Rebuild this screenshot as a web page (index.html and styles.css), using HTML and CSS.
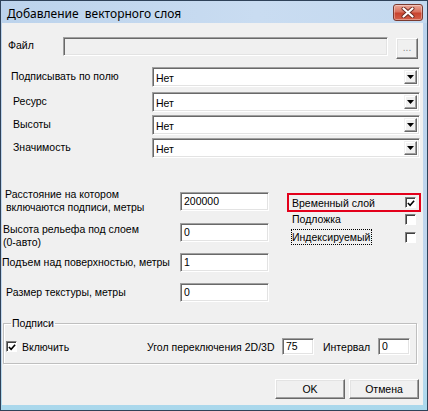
FILE: index.html
```html
<!DOCTYPE html>
<html>
<head>
<meta charset="utf-8">
<link rel="stylesheet" href="styles.css">
</head>
<body>
<div class="window">
  <div class="titlebar">
    <span class="title">Добавление  векторного слоя</span>
    <div class="close">
      <svg width="14" height="11" viewBox="0 0 14 11">
        <path d="M2.5 1.5 L11.5 9.5 M11.5 1.5 L2.5 9.5" stroke="#6e2b22" stroke-width="4" stroke-linecap="round"/>
        <path d="M2.5 1.5 L11.5 9.5 M11.5 1.5 L2.5 9.5" stroke="#ffffff" stroke-width="2.2" stroke-linecap="round"/>
      </svg>
    </div>
  </div>
  <div class="client">
    <div class="file-row">
      <span class="file-label">Файл</span>
      <div class="edit file-edit"></div>
      <div class="btn browse">...</div>
    </div>

    <div class="combo-row r1">
      <span class="combo-label first">Подписывать по полю</span>
      <div class="combo"><span class="combo-value">Нет</span><span class="drop"><svg width="7" height="4" viewBox="0 0 7 4"><path d="M0 0 H7 L3.5 4 Z" fill="#000"/></svg></span></div>
    </div>
    <div class="combo-row r2">
      <span class="combo-label">Ресурс</span>
      <div class="combo"><span class="combo-value">Нет</span><span class="drop"><svg width="7" height="4" viewBox="0 0 7 4"><path d="M0 0 H7 L3.5 4 Z" fill="#000"/></svg></span></div>
    </div>
    <div class="combo-row r3">
      <span class="combo-label">Высоты</span>
      <div class="combo"><span class="combo-value">Нет</span><span class="drop"><svg width="7" height="4" viewBox="0 0 7 4"><path d="M0 0 H7 L3.5 4 Z" fill="#000"/></svg></span></div>
    </div>
    <div class="combo-row r4">
      <span class="combo-label">Значимость</span>
      <div class="combo"><span class="combo-value">Нет</span><span class="drop"><svg width="7" height="4" viewBox="0 0 7 4"><path d="M0 0 H7 L3.5 4 Z" fill="#000"/></svg></span></div>
    </div>

    <div class="lower">
      <div class="params">
        <div class="param pa">
          <div class="param-label la"><div>Расстояние на котором</div><div class="indent">включаются подписи, метры</div></div>
          <div class="edit num fa">200000</div>
        </div>
        <div class="param pb">
          <div class="param-label lb"><div>Высота рельефа под слоем</div><div>(0-авто)</div></div>
          <div class="edit num">0</div>
        </div>
        <div class="param pc">
          <div class="param-label lc">Подъем над поверхностью, метры</div>
          <div class="edit num">1</div>
        </div>
        <div class="param pd">
          <div class="param-label ld">Размер текстуры, метры</div>
          <div class="edit num">0</div>
        </div>
      </div>
      <div class="flags">
        <div class="flag highlight">
          <span>Временный слой</span>
          <span class="check"><svg width="9" height="9" viewBox="0 0 9 9"><path d="M1 4 L3.5 6.5 L8 1.5" fill="none" stroke="#000" stroke-width="1.8"/></svg></span>
        </div>
        <div class="flag plain">
          <span>Подложка</span>
          <span class="check"></span>
        </div>
        <div class="flag focused">
          <span class="focus">Индексируемый</span>
          <span class="check"></span>
        </div>
      </div>
    </div>

    <fieldset class="group">
      <legend>Подписи</legend>
      <div class="group-row">
        <div class="enable">
          <span class="check small"><svg width="9" height="9" viewBox="0 0 9 9"><path d="M1 4 L3.5 6.5 L8 1.5" fill="none" stroke="#000" stroke-width="1.8"/></svg></span>
          <span class="enable-text">Включить</span>
        </div>
        <span class="angle-label">Угол переключения 2D/3D</span>
        <div class="edit small-num">75</div>
        <span class="interval-label">Интервал</span>
        <div class="edit small-num">0</div>
      </div>
    </fieldset>

    <div class="buttons">
      <div class="btn push">OK</div>
      <div class="btn push">Отмена</div>
    </div>
  </div>
</div>
</body>
</html>
```

FILE: styles.css
```css
* { box-sizing: border-box; }
html, body { margin: 0; padding: 0; }
body {
  width: 428px;
  height: 411px;
  overflow: hidden;
  background: #ffffff;
  font-family: "Liberation Sans", Arial, sans-serif;
  font-size: 10.5px;
  color: #000;
}

.window {
  width: 428px;
  height: 411px;
  border: 1px solid #2f4259;
  background: linear-gradient(#bad2ec, #c3d8ee 85%, #a9d8ec);
  display: flex;
  flex-direction: column;
}

.titlebar {
  height: 22px;
  display: flex;
  align-items: flex-start;
  justify-content: space-between;
  padding: 0 4px 0 6px;
  background: linear-gradient(to right, #bcd3ec, #c9dcf1 60%, #c4d9ef);
}
.title {
  font-family: "Noto Sans", "Open Sans", sans-serif;
  font-size: 12px;
  line-height: 16px;
  margin-top: 5px;
  white-space: pre;
  color: #000;
}
.close {
  width: 30px;
  height: 17px;
  margin-top: 3px;
  border: 1px solid #7a3a30;
  border-radius: 3px;
  background: linear-gradient(#eba898, #d9725f 45%, #c9432e 55%, #d4604a);
  display: flex;
  align-items: center;
  justify-content: center;
  box-shadow: inset 0 0 0 1px rgba(255,255,255,0.35);
}

.client {
  flex: 1;
  margin: 0 4px 5px 1px;
  background: #f0f0f0;
  display: flex;
  flex-direction: column;
}

/* edits */
.edit {
  height: 19px;
  border: 1px solid;
  border-color: #a0a0a0 #ffffff #ffffff #a0a0a0;
  box-shadow: inset 1px 1px 0 #696969, inset -1px -1px 0 #e3e3e3;
  background: #fff;
  padding: 0 3px;
  line-height: 17px;
  white-space: nowrap;
}

.btn {
  border: 1px solid;
  border-color: #ffffff #696969 #696969 #ffffff;
  box-shadow: inset -1px -1px 0 #a0a0a0, inset 1px 1px 0 #e3e3e3;
  background: #f0f0f0;
  display: flex;
  align-items: center;
  justify-content: center;
}

/* file row */
.file-row {
  display: flex;
  margin-top: 14px;
  height: 22px;
}
.file-label {
  width: 61px;
  padding-left: 6px;
  line-height: 16px;
}
.file-edit {
  width: 325px;
  background: #f0f0f0;
}
.browse {
  width: 22px;
  height: 21px;
  margin-left: 8px;
  margin-top: 1px;
  color: #8a8a8a;
  font-size: 10px;
  padding-bottom: 2px;
}

/* combos */
.combo-row {
  display: flex;
  align-items: center;
  height: 20px;
}
.r1 { margin-top: 8px; }
.r2 { margin-top: 5px; }
.r3, .r4 { margin-top: 3px; }
.combo-label {
  width: 150px;
  padding-left: 11px;
  margin-top: -2px;
}
.combo-label.first { padding-left: 9px; }
.combo {
  width: 268px;
  height: 20px;
  border: 1px solid;
  border-color: #a0a0a0 #ffffff #ffffff #a0a0a0;
  box-shadow: inset 1px 1px 0 #696969, inset -1px -1px 0 #e3e3e3;
  background: #fff;
  display: flex;
  align-items: stretch;
  padding: 2px 2px 2px 2px;
}
.combo-value {
  flex: 1;
  padding-left: 1px;
  line-height: 16px;
}
.drop {
  width: 13px;
  border: 1px solid;
  border-color: #f0f0f0 #696969 #696969 #f0f0f0;
  box-shadow: inset -1px -1px 0 #a0a0a0, inset 1px 1px 0 #ffffff;
  background: #f0f0f0;
  display: flex;
  align-items: center;
  justify-content: center;
}

/* lower */
.lower {
  display: flex;
  margin-top: 30px;
}
.params {
  width: 267px;
  display: flex;
  flex-direction: column;
}
.param {
  display: flex;
  align-items: flex-start;
  justify-content: space-between;
}
.param-label { line-height: 13px; white-space: nowrap; }
.num { width: 89px; }
.pa { height: 30px; }
.la { padding-left: 3px; }
.la .indent { padding-left: 1px; }
.fa { margin-top: 4px; }
.pb { margin-top: 5px; height: 27px; }
.lb { padding-left: 1px; }
.pc { margin-top: 3px; height: 19px; }
.lc { margin-top: 3px; }
.pd { margin-top: 11px; height: 19px; }
.ld { margin-top: 3px; padding-left: 4px; }

.flags {
  width: 134px;
  margin-left: 18px;
  margin-top: 5px;
  display: flex;
  flex-direction: column;
}
.flag {
  display: flex;
  align-items: center;
  justify-content: space-between;
}
.highlight {
  height: 19px;
  border: 2px solid #e3001b;
  padding: 0 3px;
}
.plain {
  height: 14px;
  padding: 0 5px;
}
.focused {
  height: 16px;
  margin-top: 3px;
  padding: 0 5px 0 4px;
}
.focus {
  border: 1px dotted #000;
  line-height: 14px;
  padding-right: 1px;
}
.check {
  width: 11px;
  height: 11px;
  border: 1px solid;
  border-color: #808080 #ffffff #ffffff #808080;
  box-shadow: inset 1px 1px 0 #404040;
  background: #fff;
  display: flex;
  align-items: center;
  justify-content: center;
}
.check svg { margin: 1px 0 0 1px; }

/* group */
.group {
  margin: 15px 0 0 1px;
  width: 414px;
  padding: 0 0 8px 0;
  border: 1px solid #bfbfbf;
  box-shadow: 1px 1px 0 #ffffff, inset 1px 1px 0 #ffffff;
  min-width: 0;
}
.group legend {
  margin-left: 7px;
  padding: 0 1px;
  line-height: 12px;
}
.group-row {
  display: flex;
  align-items: center;
  height: 17px;
  margin-top: 9px;
}
.enable {
  width: 143px;
  display: flex;
  align-items: center;
  padding-left: 2px;
}
.enable-text { margin-left: 5px; }
.angle-label { width: 135px; }
.small-num { width: 32px; height: 17px; line-height: 15px; }
.interval-label { width: 64px; padding-left: 9px; }

/* buttons */
.buttons {
  display: flex;
  justify-content: flex-end;
  gap: 4px;
  margin-top: 15px;
  padding-right: 4px;
}
.push {
  width: 70px;
  height: 20px;
}
```
